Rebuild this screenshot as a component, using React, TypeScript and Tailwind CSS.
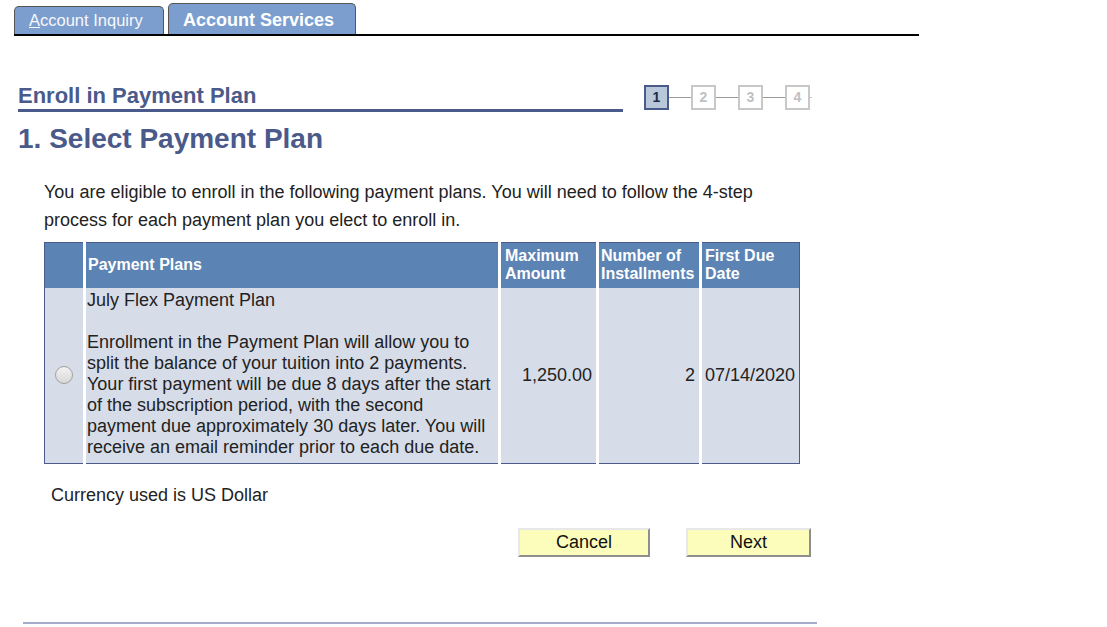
import React from 'react';

const font = { fontFamily: '"Liberation Sans", Arial, sans-serif' };

const StepBox: React.FC<{ n: number; active?: boolean }> = ({ n, active }) => (
  <div
    className={
      active
        ? 'w-[25px] h-[25px] border-2 border-[#4a5a8a] bg-[#b9c7da] flex items-center justify-center text-[14px] font-bold text-[#1f2a4a]'
        : 'w-[25px] h-[25px] border-2 border-[#c8c8c8] bg-white flex items-center justify-center text-[14px] font-bold text-[#c0c0c0]'
    }
  >
    {n}
  </div>
);

const Connector = () => <div className="w-[22px] h-px bg-[#9a9a9a]" />;

const Steps = () => (
  <div className="flex items-center">
    <StepBox n={1} active />
    <Connector />
    <StepBox n={2} />
    <Connector />
    <StepBox n={3} />
    <Connector />
    <StepBox n={4} />
    <div className="w-[2px] h-px bg-[#c8c8c8]" />
  </div>
);

const Tabs = () => (
  <div className="ml-[14px] w-[905px] pt-[3px] flex items-end gap-[4px] border-b-2 border-black">
    <div className="w-[150px] h-[28px] bg-[#7b9ece] border border-b-0 border-[#555] rounded-t-[5px] flex items-center pl-[14px] text-[16.5px] text-[#f7f8fb]">
      <span>
        <span className="underline">A</span>ccount Inquiry
      </span>
    </div>
    <div className="w-[188px] h-[31px] bg-[#7b9ece] border border-b-0 border-[#555] rounded-t-[5px] flex items-start pt-[3px] pl-[14px] text-[18px] font-bold text-white">
      Account Services
    </div>
  </div>
);

const Radio = () => (
  <div className="w-[18px] h-[18px] rounded-full border border-[#a0a0a0] bg-gradient-to-b from-[#f2f2f2] to-[#d8d8d8] mx-auto" />
);

const PlanTable = () => (
  <table className="border border-[#4a5a8a] border-collapse w-[756px]">
    <thead>
      <tr className="h-[45px] bg-[#5b83b3] text-white text-[16px] font-bold leading-[18px]">
        <th className="w-[40px] border-r-[3px] border-white" />
        <th className="w-[415px] border-r-[3px] border-white text-left align-middle pl-[2px]">Payment Plans</th>
        <th className="w-[98px] border-r-[3px] border-white text-left align-top pl-[4px] pt-[4px]">
          Maximum
          <br />
          Amount
        </th>
        <th className="w-[103px] border-r-[3px] border-white text-left align-top pl-[2px] pt-[4px]">
          Number of
          <br />
          Installments
        </th>
        <th className="text-left align-top pl-[3px] pt-[4px]">
          First Due
          <br />
          Date
        </th>
      </tr>
    </thead>
    <tbody>
      <tr className="bg-[#d6dde9] text-[18px] text-[#222] leading-[21px]">
        <td className="border-r-[3px] border-white align-middle">
          <Radio />
        </td>
        <td className="border-r-[3px] border-white align-top pl-[1px] pr-[5px] pt-[2px] pb-[5px]">
          <p>July Flex Payment Plan</p>
          <p className="mt-[21px]">
            Enrollment in the Payment Plan will allow you to split the balance of your tuition into 2 payments.
            Your first payment will be due 8 days after the start of the subscription period, with the second
            payment due approximately 30 days later. You will receive an email reminder prior to each due date.
          </p>
        </td>
        <td className="border-r-[3px] border-white align-middle text-right pr-[4px]">1,250.00</td>
        <td className="border-r-[3px] border-white align-middle text-right pr-[4px]">2</td>
        <td className="align-middle pl-[3px]">07/14/2020</td>
      </tr>
    </tbody>
  </table>
);

const Btn: React.FC<{ label: string; w: string }> = ({ label, w }) => (
  <button
    className={`${w} h-[29px] bg-[#fdfdbb] border-2 border-t-[#e8e8e8] border-l-[#e8e8e8] border-b-[#8e8e8e] border-r-[#8e8e8e] text-[18px] text-[#111] flex items-center justify-center`}
  >
    {label}
  </button>
);

export default function App() {
  return (
    <div className="w-[1107px] h-[627px] bg-white overflow-hidden" style={font}>
      <Tabs />

      <div className="ml-[18px] mt-[49px] flex items-start">
        <div className="w-[605px]">
          <h2 className="text-[22px] font-bold text-[#4a5a8a] leading-[22px] pb-[2px] border-b-[3px] border-[#4a5a8a]">
            Enroll in Payment Plan
          </h2>
        </div>
        <div className="ml-[21px]">
          <Steps />
        </div>
      </div>

      <h1 className="ml-[18px] mt-[12px] text-[28px] font-bold text-[#4a5a8a] leading-[30px]">
        1. Select Payment Plan
      </h1>

      <div className="ml-[44px] mt-[24px] w-[760px] text-[18px] text-[#222] leading-[28px]">
        You are eligible to enroll in the following payment plans. You will need to follow the 4-step process for
        each payment plan you elect to enroll in.
      </div>

      <div className="ml-[44px] mt-[8px]">
        <PlanTable />
      </div>

      <div className="ml-[51px] mt-[20px] text-[18px] text-[#222] leading-[22px]">Currency used is US Dollar</div>

      <div className="ml-[518px] mt-[22px] flex gap-[36px]">
        <Btn label="Cancel" w="w-[132px]" />
        <Btn label="Next" w="w-[125px]" />
      </div>

      <div className="ml-[23px] mt-[65px] w-[794px] h-[2px] bg-[#a4abcb]" />
    </div>
  );
}
